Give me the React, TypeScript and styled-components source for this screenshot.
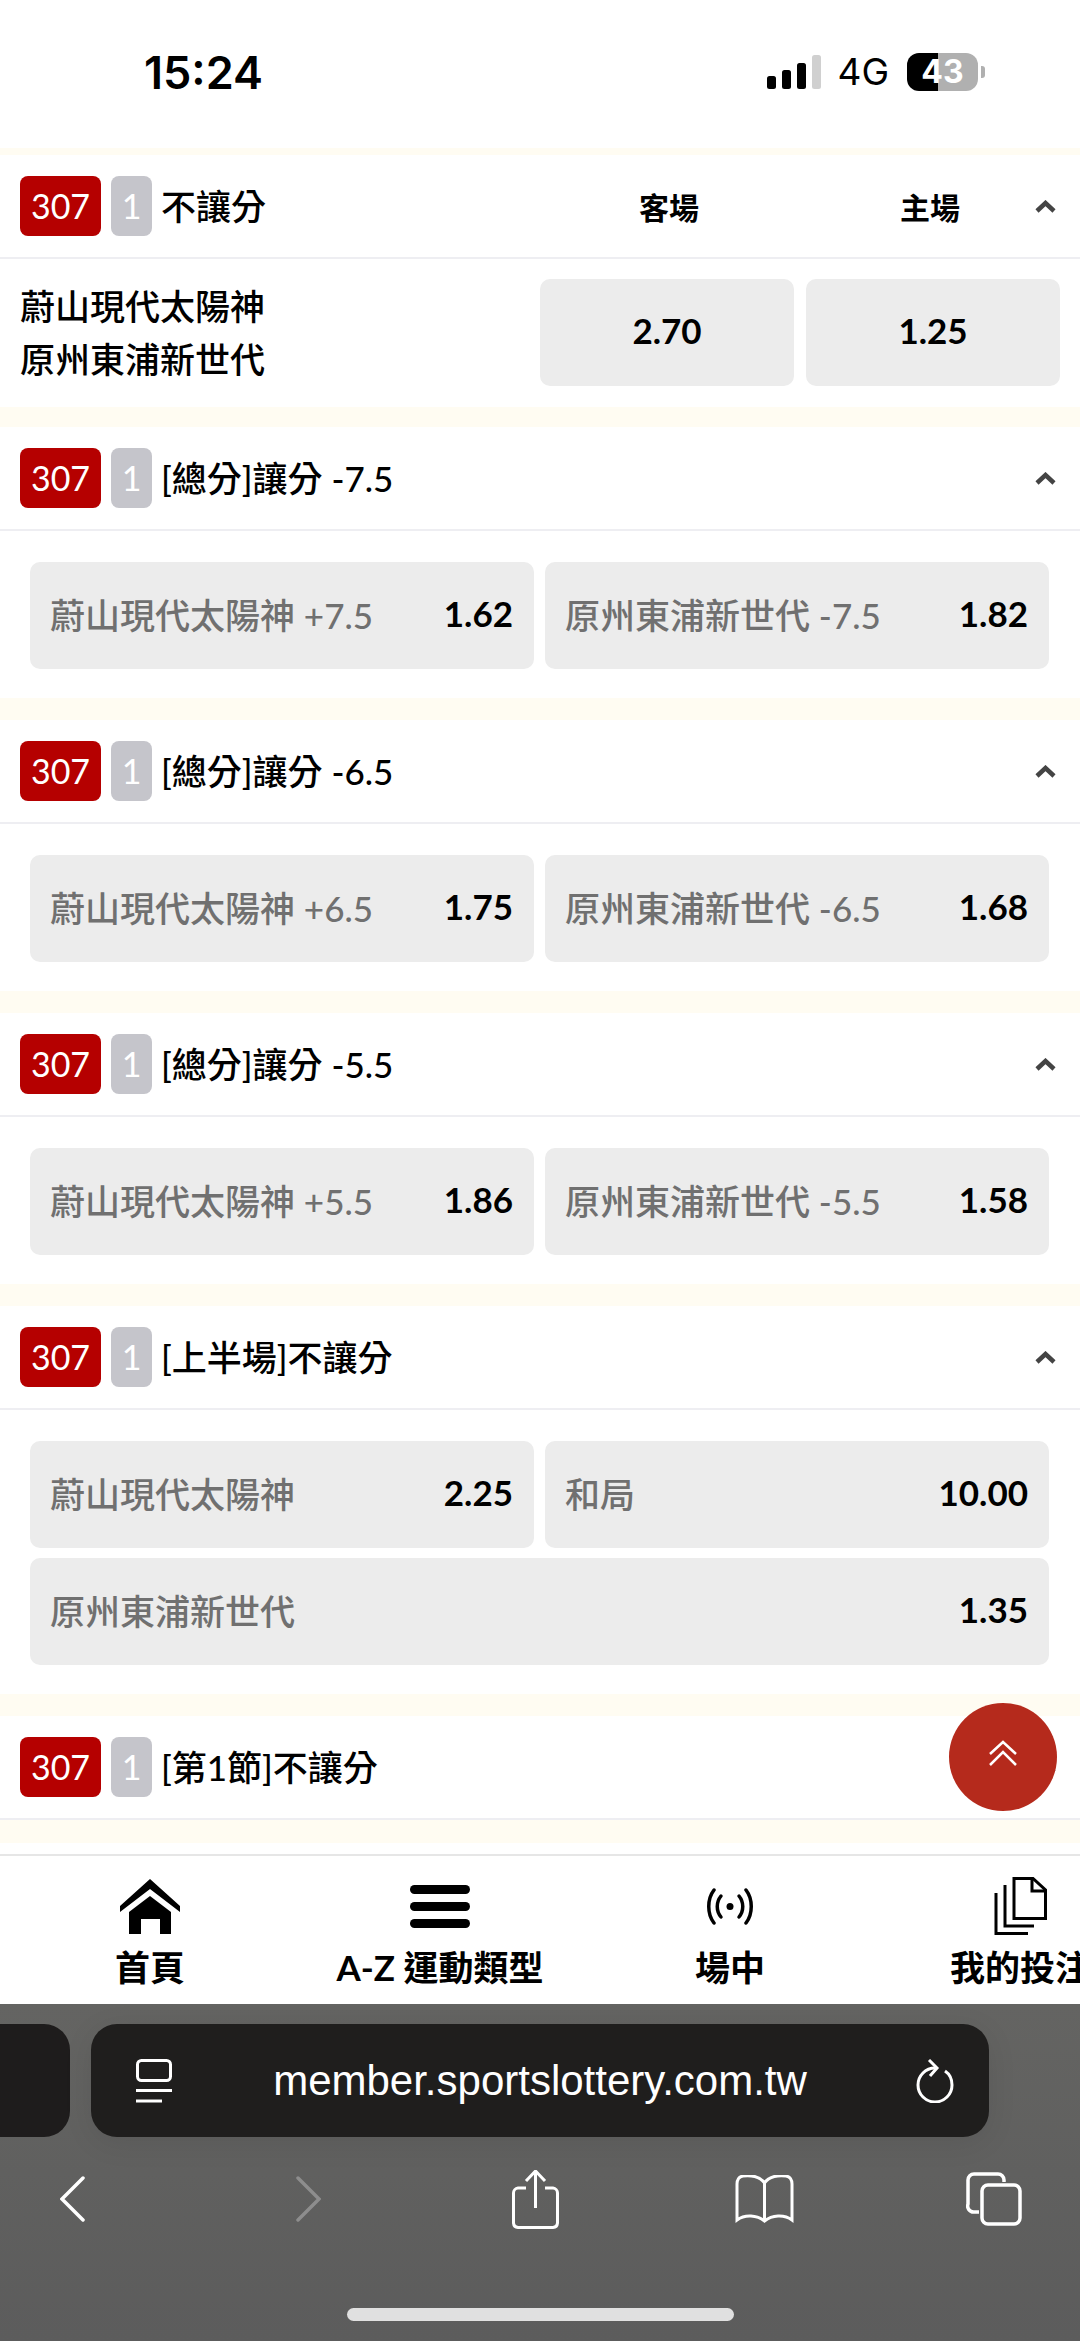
import styled, { createGlobalStyle } from 'styled-components';

const GlobalStyle = createGlobalStyle`
  html, body {
    margin: 0;
    padding: 0;
    background: #fff;
  }
  * {
    box-sizing: border-box;
  }
`;

const FONT = `Lato, "Noto Sans CJK TC", sans-serif`;

const Page = styled.div`
  width: 1080px;
  height: 2341px;
  display: flex;
  flex-direction: column;
  overflow: hidden;
  font-family: ${FONT};
  color: #000;
`;

/* status bar */
const StatusBar = styled.div`
  height: 148px;
  flex: none;
  display: flex;
  align-items: flex-start;
  justify-content: space-between;
  padding: 49px 95px 0 144px;
  background: #fff;
`;

const Clock = styled.div`
  font-family: Inter, sans-serif;
  font-size: 45px;
  line-height: 48px;
  font-weight: 600;
`;

const StatusRight = styled.div`
  display: flex;
  align-items: center;
  height: 38px;
  margin-top: 4px;
`;

const Network = styled.div`
  font-family: Inter, sans-serif;
  font-size: 37px;
  line-height: 38px;
  font-weight: 400;
  margin: 0 18px 0 15px;
`;

const Battery = styled.div`
  width: 71px;
  height: 38px;
  border-radius: 12px;
  background: linear-gradient(90deg, #000 0 31px, #b0b0b0 31px);
  color: #fff;
  font-family: Inter, sans-serif;
  font-size: 32px;
  font-weight: 700;
  line-height: 38px;
  text-align: center;
`;

const BatteryNub = styled.div`
  width: 4px;
  height: 12px;
  margin-left: 3px;
  border-radius: 0 3px 3px 0;
  background: #b0b0b0;
`;

/* market list */
const Main = styled.div`
  position: relative;
  flex: 1;
  min-height: 0;
  padding-top: 7px;
  background: #fffcf2;
  overflow: hidden;
`;

const Section = styled.section<{ $gap: number }>`
  background: #fff;
  margin-bottom: ${(p) => p.$gap}px;
`;

const Header = styled.div`
  height: 104px;
  display: flex;
  align-items: center;
  padding: 0 24px 0 20px;
  border-bottom: 2px solid #eeeef2;
`;

const Badge = styled.div<{ $grey?: boolean }>`
  width: ${(p) => (p.$grey ? 41 : 81)}px;
  height: 60px;
  margin-right: ${(p) => (p.$grey ? 9 : 10)}px;
  border-radius: 8px;
  background: ${(p) => (p.$grey ? '#c5c5cb' : '#b50000')};
  color: #fff;
  font-size: 34px;
  line-height: 60px;
  text-align: center;
  font-weight: 400;
`;

const Title = styled.div`
  flex: 1;
  font-size: 35px;
  line-height: 60px;
  font-weight: 500;
  white-space: nowrap;
`;

const ColumnLabels = styled.div`
  display: flex;
  gap: 161px;
  margin-right: 55px;
`;

const ColumnLabel = styled.div`
  width: 100px;
  text-align: center;
  font-size: 30px;
  font-weight: 700;
`;

const Caret = styled.svg`
  width: 21px;
  height: 13px;
  flex: none;
  color: #444;
`;

const MatchBody = styled.div`
  display: flex;
  align-items: center;
  padding: 20px 20px 21px 20px;
`;

const Teams = styled.div`
  flex: 1;
  font-size: 35px;
  line-height: 53px;
  font-weight: 500;
`;

const PriceButtons = styled.div`
  display: flex;
  gap: 12px;
`;

const PriceButton = styled.div`
  width: 254px;
  height: 107px;
  border-radius: 10px;
  background: #ececec;
  display: flex;
  align-items: center;
  justify-content: center;
  padding-bottom: 5px;
  font-size: 35px;
  font-weight: 700;
`;

const OddsGrid = styled.div`
  display: grid;
  grid-template-columns: 504px 504px;
  gap: 10px 11px;
  padding: 31px 0 29px 30px;
`;

const OddsButton = styled.div<{ $wide?: boolean }>`
  grid-column: ${(p) => (p.$wide ? '1 / -1' : 'auto')};
  height: 107px;
  border-radius: 10px;
  background: #ececec;
  display: flex;
  align-items: center;
  justify-content: space-between;
  padding: 0 21px 5px 20px;
`;

const OddsLabel = styled.span`
  font-size: 35px;
  font-weight: 500;
  color: #707070;
  white-space: nowrap;
`;

const OddsValue = styled.span`
  font-size: 35px;
  font-weight: 700;
`;

const ScrollTop = styled.div`
  position: absolute;
  right: 23px;
  bottom: 32px;
  width: 108px;
  height: 108px;
  border-radius: 50%;
  background: #b52a1c;
  display: flex;
  align-items: center;
  justify-content: center;
  padding-bottom: 8px;
`;

/* bottom nav */
const NavWrap = styled.div`
  flex: none;
  background: #fff;
  padding-top: 11px;
`;

const Nav = styled.nav`
  height: 150px;
  display: flex;
  padding-left: 5px;
  border-top: 2px solid #e6e6e6;
`;

const NavItem = styled.div`
  width: 290px;
  flex: none;
  display: flex;
  flex-direction: column;
  align-items: center;
`;

const NavIcon = styled.div`
  height: 78px;
  padding-top: 22px;
  display: flex;
  align-items: center;
  justify-content: center;
`;

const NavLabel = styled.div`
  margin-top: 12px;
  font-size: 35px;
  line-height: 42px;
  font-weight: 700;
  white-space: nowrap;
`;

/* safari chrome */
const Browser = styled.div`
  height: 337px;
  flex: none;
  background: linear-gradient(180deg, #646462 0%, #5c5c5c 100%);
  display: flex;
  flex-direction: column;
`;

const TabRow = styled.div`
  display: flex;
  gap: 21px;
  padding-top: 20px;
`;

const GhostTab = styled.div`
  width: 70px;
  height: 113px;
  border-radius: 0 26px 26px 0;
  background: #1e1c1c;
`;

const AddressBar = styled.div`
  width: 898px;
  height: 113px;
  border-radius: 26px;
  background: #1f1e1d;
  display: flex;
  align-items: center;
  justify-content: space-between;
  padding: 0 35px 0 45px;
  box-shadow: 0 6px 30px rgba(0, 0, 0, 0.08);
`;

const Url = styled.div`
  margin-right: 8px;
  color: #fff;
  font-family: "Liberation Sans", sans-serif;
  font-size: 42px;
`;

const Toolbar = styled.div`
  display: grid;
  grid-template-columns: 236px 216px 223px 231px auto;
  align-items: center;
  height: 60px;
  margin-top: 32px;
  padding-left: 60px;
`;

const HomeIndicator = styled.div`
  width: 387px;
  height: 13px;
  margin: 79px auto 0;
  border-radius: 7px;
  background: #e0e0e0;
`;

const sections = [
  { title: '[總分]讓分 -7.5', home: '+7.5', away: '-7.5', a: '1.62', b: '1.82' },
  { title: '[總分]讓分 -6.5', home: '+6.5', away: '-6.5', a: '1.75', b: '1.68' },
  { title: '[總分]讓分 -5.5', home: '+5.5', away: '-5.5', a: '1.86', b: '1.58' },
];

const HOME_TEAM = '蔚山現代太陽神';
const AWAY_TEAM = '原州東浦新世代';

function SectionHeader({ title, children }: { title: string; children?: React.ReactNode }) {
  return (
    <Header>
      <Badge>307</Badge>
      <Badge $grey>1</Badge>
      <Title>{title}</Title>
      {children}
      <Caret viewBox="0 0 21 13">
        <path d="M2 11 L10.5 3 L19 11" fill="none" stroke="currentColor" strokeWidth="4.5" />
      </Caret>
    </Header>
  );
}

export default function App() {
  return (
    <Page>
      <GlobalStyle />
      <StatusBar>
        <Clock>15:24</Clock>
        <StatusRight>
          <svg width="55" height="34" viewBox="0 0 55 34">
            <rect x="0" y="21" width="9" height="13" rx="2.5" fill="#000" />
            <rect x="15" y="15" width="9" height="19" rx="2.5" fill="#000" />
            <rect x="30" y="8" width="9" height="26" rx="2.5" fill="#000" />
            <rect x="45" y="0" width="9" height="34" rx="2.5" fill="#d0d0d0" />
          </svg>
          <Network>4G</Network>
          <Battery>43</Battery>
          <BatteryNub />
        </StatusRight>
      </StatusBar>

      <Main>
        <Section $gap={20}>
          <SectionHeader title="不讓分">
            <ColumnLabels>
              <ColumnLabel>客場</ColumnLabel>
              <ColumnLabel>主場</ColumnLabel>
            </ColumnLabels>
          </SectionHeader>
          <MatchBody>
            <Teams>
              <div>{HOME_TEAM}</div>
              <div>{AWAY_TEAM}</div>
            </Teams>
            <PriceButtons>
              <PriceButton>2.70</PriceButton>
              <PriceButton>1.25</PriceButton>
            </PriceButtons>
          </MatchBody>
        </Section>

        {sections.map((s) => (
          <Section $gap={22} key={s.title}>
            <SectionHeader title={s.title} />
            <OddsGrid>
              <OddsButton>
                <OddsLabel>{HOME_TEAM} {s.home}</OddsLabel>
                <OddsValue>{s.a}</OddsValue>
              </OddsButton>
              <OddsButton>
                <OddsLabel>{AWAY_TEAM} {s.away}</OddsLabel>
                <OddsValue>{s.b}</OddsValue>
              </OddsButton>
            </OddsGrid>
          </Section>
        ))}

        <Section $gap={22}>
          <SectionHeader title="[上半場]不讓分" />
          <OddsGrid>
            <OddsButton>
              <OddsLabel>{HOME_TEAM}</OddsLabel>
              <OddsValue>2.25</OddsValue>
            </OddsButton>
            <OddsButton>
              <OddsLabel>和局</OddsLabel>
              <OddsValue>10.00</OddsValue>
            </OddsButton>
            <OddsButton $wide>
              <OddsLabel>{AWAY_TEAM}</OddsLabel>
              <OddsValue>1.35</OddsValue>
            </OddsButton>
          </OddsGrid>
        </Section>

        <Section $gap={0}>
          <SectionHeader title="[第1節]不讓分" />
        </Section>

        <ScrollTop>
          <svg width="32" height="26" viewBox="0 0 32 26" fill="none" stroke="#fff" strokeWidth="2.5">
            <path d="M3 14 L16 2 L29 14" />
            <path d="M3 25 L16 12 L29 25" />
          </svg>
        </ScrollTop>
      </Main>

      <NavWrap>
        <Nav>
          <NavItem>
            <NavIcon>
              <svg width="60" height="55" viewBox="0 0 60 55" fill="#000">
                <path d="M30 0 L60 27 V33 L30 10 L0 33 V27 Z" />
                <path d="M30 17 L51 33 V55 H40 V40 H21 V55 H9 V33 Z" />
              </svg>
            </NavIcon>
            <NavLabel>首頁</NavLabel>
          </NavItem>
          <NavItem>
            <NavIcon>
              <svg width="60" height="43" viewBox="0 0 60 43" fill="#000">
                <rect x="0" y="0" width="60" height="9" rx="4.5" />
                <rect x="0" y="17" width="60" height="9" rx="4.5" />
                <rect x="0" y="34" width="60" height="9" rx="4.5" />
              </svg>
            </NavIcon>
            <NavLabel>A-Z 運動類型</NavLabel>
          </NavItem>
          <NavItem>
            <NavIcon>
              <svg width="46" height="37" viewBox="0 0 46 37" fill="none" stroke="#000" strokeWidth="3.5" strokeLinecap="round">
                <circle cx="23" cy="18.5" r="3.5" fill="#000" stroke="none" />
                <path d="M14 8 C9 14 9 23 14 29" />
                <path d="M32 8 C37 14 37 23 32 29" />
                <path d="M7 2 C0 11 0 26 7 35" />
                <path d="M39 2 C46 11 46 26 39 35" />
              </svg>
            </NavIcon>
            <NavLabel>場中</NavLabel>
          </NavItem>
          <NavItem>
            <NavIcon>
              <svg width="53" height="58" viewBox="0 0 53 58" fill="none" stroke="#000" strokeWidth="3">
                <path d="M20 1.5 H39 L51.5 13 V41.5 H20 Z" />
                <path d="M38 1.5 V14 H51.5" />
                <path d="M11 8 V49 H40" />
                <path d="M2 16 V56.5 H34" />
              </svg>
            </NavIcon>
            <NavLabel>我的投注</NavLabel>
          </NavItem>
        </Nav>
      </NavWrap>

      <Browser>
        <TabRow>
          <GhostTab />
          <AddressBar>
            <svg width="36" height="44" viewBox="0 0 36 44" fill="none" stroke="#fff" strokeWidth="3">
              <rect x="1.5" y="1.5" width="33" height="20" rx="4" />
              <path d="M0 31.5 H36" />
              <path d="M0 42 H26" />
            </svg>
            <Url>member.sportslottery.com.tw</Url>
            <svg width="38" height="44" viewBox="0 0 38 44" fill="none" stroke="#fff" strokeWidth="3">
              <path d="M19 9 A17 17 0 1 0 36 26 C36 20 33.5 15 29 12" />
              <path d="M13 1 L21 9 L14 17" />
            </svg>
          </AddressBar>
        </TabRow>
        <Toolbar>
          <svg width="25" height="46" viewBox="0 0 25 46" fill="none" stroke="#fff" strokeWidth="3.5" strokeLinecap="round">
            <path d="M23 2 L2 23 L23 44" />
          </svg>
          <svg width="25" height="46" viewBox="0 0 25 46" fill="none" stroke="#8d8d8d" strokeWidth="3.5" strokeLinecap="round">
            <path d="M2 2 L23 23 L2 44" />
          </svg>
          <svg width="47" height="59" viewBox="0 0 47 59" fill="none" stroke="#fff" strokeWidth="3">
            <path d="M14 18 H6 A5 5 0 0 0 1.5 23 V53 A5 5 0 0 0 6 57.5 H41 A5 5 0 0 0 45.5 53 V23 A5 5 0 0 0 41 18 H33" />
            <path d="M23.5 1 V38" />
            <path d="M14 11 L23.5 1 L33 11" />
          </svg>
          <svg width="59" height="48" viewBox="0 0 59 48" fill="none" stroke="#fff" strokeWidth="3">
            <path d="M29.5 8 C25 1 15 0 8 1 C4 1.5 2 5 2 9 V45 C10 39 22 40 29.5 46 C37 40 49 39 57 45 V9 C57 5 55 1.5 51 1 C44 0 34 1 29.5 8 Z" />
            <path d="M29.5 8 V46" />
          </svg>
          <svg width="56" height="54" viewBox="0 0 56 54" fill="none" stroke="#fff" strokeWidth="3.5">
            <rect x="16" y="13" width="38" height="39" rx="6" />
            <path d="M38 10 V8 A6 6 0 0 0 32 2 H8 A6 6 0 0 0 2 8 V32 A6 6 0 0 0 8 40 H13" />
          </svg>
        </Toolbar>
        <HomeIndicator />
      </Browser>
    </Page>
  );
}
